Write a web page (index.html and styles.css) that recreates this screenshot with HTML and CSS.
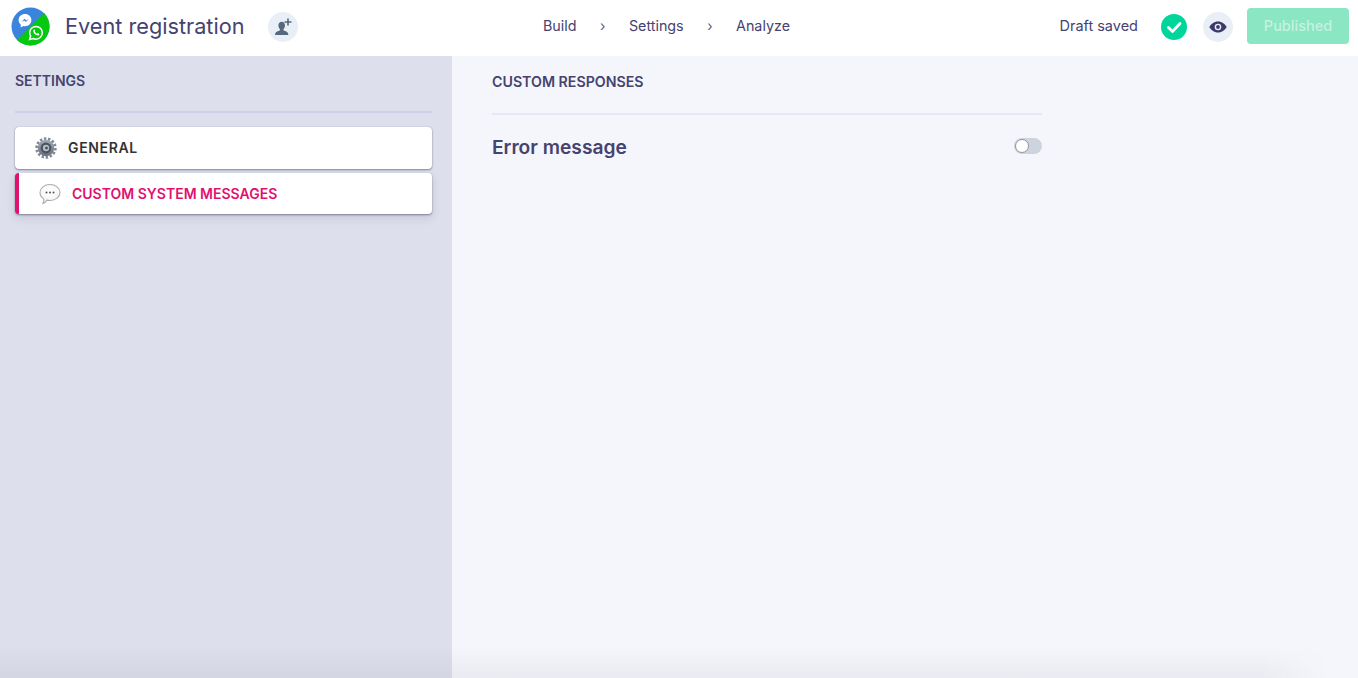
FILE: index.html
```html
<!DOCTYPE html>
<html lang="en">
<head>
<meta charset="utf-8">
<title>Event registration</title>
<link rel="stylesheet" href="styles.css">
</head>
<body>
<header class="topbar">
  <div class="topbar-left">
    <svg class="logo" width="39" height="39" viewBox="0 0 39 39">
      <defs><clipPath id="logo-clip"><circle cx="19.5" cy="19.5" r="19"/></clipPath></defs>
      <g clip-path="url(#logo-clip)">
        <rect width="39" height="39" fill="#3a84de"/>
        <path d="M39 0V39H0Z" fill="#06c80e"/>
      </g>
      <path d="M14 7c-3.600 0-6.400 2.600-6.400 6 0 1.800.8 3.400 2.100 4.500V20.500l2.600-1.400c.5.150 1.100.2 1.700.2 3.600 0 6.400-2.700 6.400-6.200S17.600 7 14 7Z" fill="#fff"/>
      <path d="M10.500 15l3-3.200 1.700 1.600 2.700-1.600-3 3.200-1.700-1.600Z" fill="#3a84de"/>
      <path d="M25 19.500c-3.500 0-6.300 2.800-6.300 6.200 0 1.200.3 2.300.9 3.300l-1 3.500 3.600-1c.9.500 1.800.7 2.800.7 3.500 0 6.300-2.900 6.300-6.400S28.500 19.500 25 19.500Z" fill="none" stroke="#fff" stroke-width="1.500"/>
      <path d="M22.600 23c-.9 1 .1 3 1.300 4.100s2.900 2 3.900 1.100c.7-.7.600-1.300.2-1.500l-1.200-.6-.8.700c-.8-.3-1.900-1.300-2.300-2.200l.6-.8-.6-1.200c-.3-.3-.7-.1-1.100.4Z" fill="#fff"/>
    </svg>
    <h1 class="app-title">Event registration</h1>
    <button class="round-btn add-user" aria-label="Add collaborator">
      <svg width="18" height="18" viewBox="0 0 18 18">
        <path d="M1 17c.2-2.600 1.500-3.400 3.300-3.900 1.200-.4 1.700-.7 1.700-1.400 0-.5-.4-.9-.8-1.500C4.700 9.600 4.400 8.700 4.400 7.500 4.400 5.200 5.800 3.800 7.700 3.800s3.300 1.400 3.300 3.700c0 1.200-.3 2.100-.8 2.700-.4.600-.8 1-.8 1.500 0 .7.500 1 1.700 1.400 1.800.5 3.100 1.300 3.300 3.900Z" fill="#56687c"/>
        <path d="M13.200 0.500h1.600v2.700h2.700v1.600h-2.700v2.700h-1.600V4.800h-2.700V3.200h2.700Z" fill="#56687c"/>
      </svg>
    </button>
  </div>
  <nav class="steps">
    <a class="step">Build</a>
    <span class="sep">›</span>
    <a class="step">Settings</a>
    <span class="sep">›</span>
    <a class="step">Analyze</a>
  </nav>
  <div class="topbar-right">
    <span class="draft">Draft saved</span>
    <svg class="saved" width="26" height="26" viewBox="0 0 26 26">
      <circle cx="13" cy="13" r="13" fill="#00d69b"/>
      <path d="M7.500 13.500l4 4 7.500-8" fill="none" stroke="#fff" stroke-width="2.800" stroke-linecap="round" stroke-linejoin="round"/>
    </svg>
    <button class="round-btn preview" aria-label="Preview">
      <svg width="18" height="12" viewBox="0 0 18 12">
        <path d="M9 0.500C5 0.500 1.900 3.200 0.300 6 1.900 8.800 5 11.500 9 11.500S16.100 8.800 17.700 6C16.100 3.200 13 0.500 9 0.500Z" fill="#3b3a6b"/>
        <circle cx="9" cy="6" r="3.300" fill="#e9eff6"/>
        <circle cx="9" cy="6" r="1.900" fill="#3b3a6b"/>
      </svg>
    </button>
    <button class="publish">Published</button>
  </div>
</header>
<div class="body">
  <aside class="sidebar">
    <h2 class="section-title sidebar-title">SETTINGS</h2>
    <ul class="menu">
      <li class="menu-item general">
        <svg class="menu-icon" width="22" height="22" viewBox="0 0 22 22">
          <defs>
            <linearGradient id="gear-fill" x1="0" y1="0" x2="0" y2="1">
              <stop offset="0" stop-color="#a3abb6"/>
              <stop offset="1" stop-color="#666e7a"/>
            </linearGradient>
            <radialGradient id="bubble-fill" cx=".45" cy=".3" r=".8">
              <stop offset="0" stop-color="#fff"/>
              <stop offset=".7" stop-color="#f6f6f6"/>
              <stop offset="1" stop-color="#d2d4d4"/>
            </radialGradient>
          </defs>
          <circle cx="11" cy="11" r="9.200" fill="none" stroke="#838b96" stroke-width="3" stroke-dasharray="2.400 1.700"/>
          <circle cx="11" cy="11" r="8.200" fill="url(#gear-fill)"/>
          <circle cx="11" cy="11" r="5.400" fill="#4b535e"/>
          <circle cx="11" cy="11" r="3.200" fill="#b4bbc4"/>
          <circle cx="11.500" cy="11" r="1.300" fill="#3e4650"/>
        </svg>
        <span>GENERAL</span>
      </li>
      <li class="menu-item active">
        <svg class="menu-icon" width="22" height="22" viewBox="0 0 22 22">
          <path d="M11 1.500c5.600 0 10 3.500 10 8s-4.400 8-10 8c-1 0-2-.1-3-.4-.8 1.400-2.200 3-4 3.400 .6-1.300.9-3 .8-4.600C2.400 14.400 1 12.100 1 9.500c0-4.500 4.400-8 10-8Z" fill="url(#bubble-fill)" stroke="#a9acad" stroke-width="1.100"/>
          <circle cx="7.500" cy="9.500" r="1" fill="#555"/>
          <circle cx="11" cy="9.500" r="1" fill="#555"/>
          <circle cx="14.500" cy="9.500" r="1" fill="#555"/>
        </svg>
        <span>CUSTOM SYSTEM MESSAGES</span>
      </li>
    </ul>
  </aside>
  <main class="content">
    <div class="panel">
      <h2 class="section-title panel-title">CUSTOM RESPONSES</h2>
      <div class="row">
        <h3 class="row-title">Error message</h3>
        <span class="toggle"><span class="knob"></span></span>
      </div>
    </div>
  </main>
  <div class="bottom-fade"></div>
</div>
</body>
</html>
```

FILE: styles.css
```css
* { box-sizing: border-box; }
html, body { height: 100%; }
body {
  margin: 0;
  display: flex;
  flex-direction: column;
  height: 678px;
  overflow: hidden;
  font-family: Inter, "Liberation Sans", sans-serif;
  color: #454370;
  background: #f5f6fb;
}
.topbar {
  height: 56px;
  flex: none;
  display: grid;
  grid-template-columns: 1fr auto 1fr;
  align-items: center;
  background: #fff;
  padding: 0 9px 0 11px;
}
.topbar-left, .topbar-right { display: flex; align-items: center; }
.topbar-right { justify-content: flex-end; }
.logo { flex: none; margin-top: -4px; }
.app-title {
  margin: 0 0 5px 15px;
  font-size: 21.700px;
  font-weight: 400;
  color: #454370;
}
.round-btn {
  width: 30px;
  height: 30px;
  border: 0;
  padding: 0;
  border-radius: 50%;
  background: #e9eff6;
  display: flex;
  align-items: center;
  justify-content: center;
}
.add-user { margin: -3px 0 0 23px; }
.steps {
  display: flex;
  align-items: center;
  margin: -5px 0 0 -27px;
  font-size: 14.300px;
  color: #454370;
}
.sep { margin: 0 23.500px; font-size: 14px; color: #5d5c80; }
.draft { font-size: 14.500px; margin: -5px 23px 0 0; }
.saved { flex: none; margin-top: -3px; }
.preview { margin: -3px 0 0 16px; }
.publish {
  width: 102px;
  height: 36px;
  margin: -4px 0 0 14px;
  padding: 0 0 2px;
  border: 0;
  border-radius: 4px;
  background: #8ae6c3;
  color: #c5f2e1;
  font: 500 14.500px Inter, "Liberation Sans", sans-serif;
}
.body { flex: 1; display: flex; position: relative; min-height: 0; }
.sidebar {
  width: 452px;
  flex: none;
  padding: 0 20px 0 15px;
  background: #dddfec;
}
.section-title {
  margin: 0;
  font-weight: 600;
  color: #454370;
}
.sidebar-title {
  height: 57px;
  padding-top: 16px;
  font-size: 14px;
  border-bottom: 2px solid #cfd2e6;
}
.menu {
  list-style: none;
  margin: 14px 0 0;
  padding: 0;
  display: flex;
  flex-direction: column;
  gap: 4px;
}
.menu-item {
  height: 42px;
  display: flex;
  align-items: center;
  gap: 11px;
  padding-left: 20px;
  background: #fff;
  border-radius: 4px;
  font-size: 14px;
  font-weight: 600;
  color: #333;
  box-shadow: 0 1px 2px rgba(60, 60, 90, .55), 0 0 1px rgba(60, 60, 90, .4);
}
.general { letter-spacing: .65px; }
.general span { margin-bottom: 2px; }
.menu-item.active {
  height: 41px;
  color: #e0116f;
  border-left: 4px solid #e0116f;
  box-shadow: 0 1px 2px rgba(60, 60, 90, .55), 0 4px 10px rgba(60, 60, 90, .14);
}
.menu-icon { flex: none; }
.content { flex: 1; padding: 0 0 0 40px; }
.panel { width: 550px; }
.panel-title {
  height: 59px;
  padding-top: 17px;
  font-size: 14.200px;
  border-bottom: 2px solid #e5e9f3;
}
.row {
  display: flex;
  justify-content: space-between;
  align-items: flex-start;
  padding-top: 20px;
}
.row-title { margin: 0; font-size: 19.200px; font-weight: 600; color: #454370; }
.toggle {
  width: 28px;
  height: 16px;
  margin-top: 3px;
  padding: 1px;
  border-radius: 8px;
  background: #cdd4de;
  display: block;
}
.knob {
  display: block;
  width: 14px;
  height: 14px;
  border-radius: 50%;
  background: #fff;
  border: 1px solid #8d96a0;
}
.bottom-fade {
  position: absolute;
  left: 0;
  right: 30px;
  bottom: 0;
  height: 32px;
  pointer-events: none;
  background: linear-gradient(to bottom, rgba(70, 70, 90, 0), rgba(70, 70, 90, .05) 80%, rgba(70, 70, 90, .055));
  -webkit-mask-image: linear-gradient(to right, #000 95%, transparent);
  mask-image: linear-gradient(to right, #000 95%, transparent);
}
```
